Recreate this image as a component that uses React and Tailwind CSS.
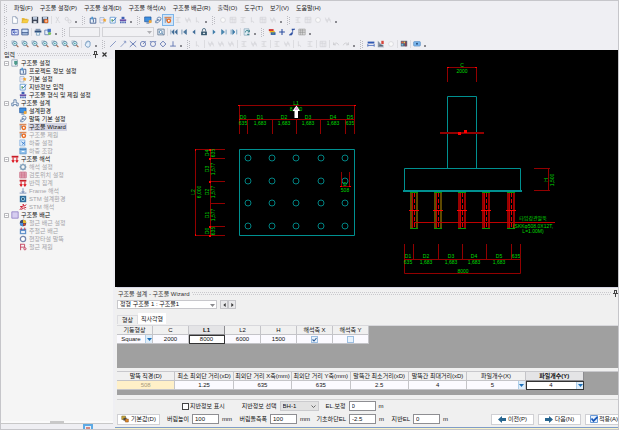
import React from "react";

const NAVY = "#1f3f7a";
const GHOST = "#d2d2d6";

/* Every glyph is drawn on a 10 x 10 grid. */
const GLYPHS = {
  file: <path d="M2 .8h4l2 2v6.4H2zM6 .8v2h2" fill="#fff" stroke="#8193ad" strokeWidth=".8" />,
  open: <g><path d="M1 8.5V2.5h3l1 1h3v1.5" fill="#e8b93c" /><path d="M.8 8.6 2.6 4.6h7L8 8.6z" fill="#f7cf45" stroke="#c99a25" strokeWidth=".4" /></g>,
  save: <g><path d="M1 1h8v8H1z" fill="#3c4556" /><path d="M2.5 1h5v3.6h-5z" fill="#b9c6da" /><path d="M3 6.4h4V9H3z" fill="#e6e9ee" /></g>,
  saveRun: <g><path d="M1 1h8v8H1z" fill="#4c5566" /><path d="M2.5 1h5v3h-5z" fill="#b9c6da" /><circle cx="6.4" cy="6.4" r="2.8" fill="#e96a24" /><path d="M5 6.4h2.8M6.4 5v2.8" stroke="#fff" strokeWidth=".7" /></g>,
  cut: <path d="M2.5 1 6 7M6 1 3 7M2 8h1.6M6 8h1.6" stroke={GHOST} strokeWidth="1" fill="none" />,
  gears: <g fill="none" stroke={GHOST} strokeWidth="1.1"><circle cx="3.4" cy="3.6" r="2" /><circle cx="7" cy="6.8" r="1.9" /></g>,
  project: <g><path d="M1.5 2.8h7v6.2h-7z" fill="#e9f2fb" stroke={NAVY} strokeWidth=".9" /><path d="M3 1h2v3.5H3z" fill="#4b9ad8" /><path d="M5.5 4v4" stroke={NAVY} strokeWidth=".9" /></g>,
  basic: <g><path d="M1.2 2h5v6.6h-5z" fill="#fff" stroke="#7f9dc2" strokeWidth=".8" /><path d="M2.2 4h3M2.2 6h3" stroke="#b49ad0" strokeWidth=".7" /><path d="M5 3.6 6.4 4 7.2 2.8l.6 1.4 1.6.5-1.2 1.1.3 1.7-1.5-.8-1.5.8.3-1.7z" fill="#f3a52a" /></g>,
  ground: <g><path d="M1.4 1.6h6.4v7.2H1.4z" fill="#fff" stroke="#4787c8" strokeWidth=".9" /><path d="M3 4h2v3H3z" fill="#6ba86c" /><path d="M4.6 6.8 9 2" stroke="#3c78b9" strokeWidth="1.2" /></g>,
  type: <g fill="#3d5fb3"><path d="M3.2 1h3.6v2.8H3.2z" /><path d="M1 4.2h8v2.2H1z" fill="#6a4ea8" /><path d="M1.4 6.8h1.8V9H1.4zM4.1 6.8h1.8V9H4.1zM6.8 6.8h1.8V9H6.8z" /></g>,
  monitor: <g><path d="M.8 1.2h8v6h-8z" fill="#3c8fe0" stroke="#1b4f95" strokeWidth=".8" /><path d="M3 8.8h3.6" stroke="#1b4f95" /><path d="M6 5.2h3.4v3.6H6z" fill="#f2a93c" /></g>,
  clip: <g fill="none" stroke="#587aa8" strokeWidth="1"><ellipse cx="6.4" cy="3.4" rx="2.4" ry="2" /><path d="M4.2 4 2 6.4v2h3l3.6-3.6M3 7l3-3" /></g>,
  wizard: <g><path d="M.6 1h8.6v2H.6z" fill="#d98a5c" /><path d="M1.6 3v5.6M3 3v3" stroke="#6a7d97" strokeWidth=".9" /><circle cx="6" cy="6" r="3" fill="#ea6d24" /><circle cx="6" cy="6" r="1.2" fill="#fff" /></g>,
  load: <g><path d="M1 1.2h6.4v7.4H1z" fill="#dcebfa" stroke="#6ea4dc" strokeWidth=".8" /><path d="M3 3.4 7.6 7M7.6 3.4 4 7" stroke="#3d7fd0" strokeWidth="1.2" /></g>,
  combo: <g><path d="M1 1.4h8v7.2H1z" fill="#8fc0ea" stroke="#4e8bc6" strokeWidth=".8" /><path d="M1 3h8" stroke="#3b77b5" /><path d="M3.4 5.6h3.4" stroke="#fff" strokeWidth="1.2" /></g>,
  bookmark: <g><path d="M1 1h7v8H1z" fill="#eef3f8" stroke="#7b8ea6" strokeWidth=".8" /><path d="M4 2.6h4v3.4L6 8 4 6z" fill="#4b9a8a" /></g>,
  house: <path d="M3.6 1h2.8v4H9v3.6H7V7H3v1.6H1V5h2.6z" fill="#f4f8fd" stroke="#3f6495" strokeWidth=".9" />,
  react: <g><path d="M.8 1h8.4v2.2H.8z" fill="#c81e28" /><path d="M2.6 3v5.6M7.4 3v5.6M1 6.6l1.6 2.2 1.6-2.2M5.8 6.6l1.6 2.2L9 6.6" stroke="#dc1822" strokeWidth="1.3" fill="none" /></g>,
  gear: <g><circle cx="5" cy="5" r="3" fill="none" stroke="#7d9db8" strokeWidth="1.8" /><path d="M5 .6v1.6M5 7.8v1.6M.6 5h1.6M7.8 5h1.6M1.9 1.9 3 3M7 7l1.1 1.1M8.1 1.9 7 3M3 7 1.9 8.1" stroke="#7d9db8" strokeWidth="1.2" /></g>,
  redgrid: <path d="M1 1.4h8v7.2H1zM1 3.8h8M1 6.2h8M3.6 1.4v7.2M6.4 1.4v7.2" fill="#f7e4ea" stroke="#b83a5c" strokeWidth=".8" />,
  frame: <path d="M5 1.5v5.6M.8 7.6h8.4M3.4 5l1.6 2L6.6 5" fill="none" stroke="#6d86b4" strokeWidth="1.1" />,
  stm: <g><path d="M1 1h8v8H1z" fill="#2d6b9a" /><circle cx="5" cy="5" r="2.5" fill="#9fd0e8" /><circle cx="5" cy="5" r="1.2" fill="#173a58" /></g>,
  stmrun: <path d="M1 8.6 4 5 1.6 4.6 5.6 4 5 1.4 7 3.6 9.2 2M3 8.6 5.4 6l2.4 2.4M6.4 5.2 9 5.8" fill="none" stroke="#cc2035" strokeWidth="1.2" />,
  rebar: <path d="M1 1h8v8H1z" fill="#d6cdf0" stroke="#8d7cc4" strokeWidth="1" />,
  colors: <g><circle cx="5" cy="5" r="4" fill="#3c4c70" /><path d="M5 5V1a4 4 0 0 1 4 4z" fill="#e5b72f" /><path d="M5 5v4a4 4 0 0 1-4-4z" fill="#4b8bd4" /><circle cx="6.8" cy="7" r="1.6" fill="#c94b33" /></g>,
  cal: <g><path d="M1 2.2h8V9H1z" fill="#5e8fc9" /><path d="M2.8.8v3M7.2.8v3" stroke="#cc3347" strokeWidth="1.1" /><path d="M2.6 5h4.8v2.6H2.6z" fill="#e8eef8" /></g>,
  ring: <circle cx="5" cy="5" r="3.3" fill="#fff" stroke="#7285ad" strokeWidth="1.6" />,
  flag: <g fill="none" stroke="#c33b5a" strokeWidth="1.1"><path d="M2 1v8M2 1.6h5v3.6H2" /><circle cx="7.4" cy="7.2" r="1.4" /></g>,
  tray: <g><path d="M1 1.4h8v7.2H1z" fill="#cfe0f8" stroke={NAVY} strokeWidth=".9" /><path d="M1 6h8" stroke={NAVY} strokeWidth="1.2" /></g>,
  back: <g><path d="M1 2h8v6.6H1z" fill="#dfe9fa" stroke="#3344a0" strokeWidth="1" /><path d="M1 2.2h3.6" stroke="#3344a0" strokeWidth="1.6" /><path d="M2.6 5.3h4.6M4.6 3.6 2.8 5.3l1.8 1.7" fill="none" stroke="#2d45b0" strokeWidth="1" /></g>,
  printer: <g><path d="M2 1h6v2.2H2z" fill="#7f95b0" /><path d="M.8 3.2h8.4v2.4H.8z" fill="#2f4f7c" /><path d="M3 5.6h4V9H3z" fill="#e8f3fa" stroke="#4b7ca5" strokeWidth=".7" /></g>,
  preview: <g><path d="M1 2.6h5v5.8H1z" fill="#e8effa" stroke="#3a5c9a" strokeWidth=".8" /><path d="M4.4 1h4.2v4.4H4.4z" fill="#3f6fc1" /><circle cx="7" cy="7" r="1.9" fill="#7fc35e" /></g>,
  capture: <g><path d="M1 1.4h8v7.2H1z" fill="#e3ebf5" stroke="#586b84" strokeWidth=".9" /><circle cx="4.6" cy="5" r="1.9" fill="#fff" stroke="#3b719f" strokeWidth=".9" /><path d="m6 6.4 2 1.8" stroke="#3b719f" /></g>,
  first: <path d="M5 2v6L2 5zM9 2v6L6 5zM1 2v6" fill="#3e6b96" stroke="#3e6b96" strokeWidth=".6" />,
  prevEnd: <path d="M8 2v6L4.4 5zM2.4 2v6" fill="#4b789f" stroke="#3e6b96" strokeWidth=".8" />,
  prev: <path d="M6.6 2v6L3 5z" fill="#3e6b96" />,
  lock: <g><path d="M1.4 4.4h7.2V9H1.4z" fill="#35566d" /><path d="M3 4.4V2.6a2 2 0 0 1 4 0v1.8" fill="none" stroke="#47697f" strokeWidth="1.1" /><path d="M3.6 6h2.8v1.6H3.6z" fill="#d7e3e8" /></g>,
  next: <path d="M3.4 2v6L7 5z" fill="#3e7ca9" />,
  nextEnd: <path d="M2 2v6l3.6-3zM7.6 2v6" fill="#4b89b0" stroke="#3e7ca9" strokeWidth=".8" />,
  last: <path d="M1.4 2v6M3.4 2v6l2.8-3zM8.4 2v6" fill="#3e7ca9" stroke="#3e7ca9" strokeWidth=".8" />,
  refresh: <g><path d="M1.4 1h6v8h-6z" fill="#e0eef5" stroke="#6f94aa" strokeWidth=".7" /><path d="M3 5.6a2.4 2.4 0 0 1 4.6-1.2M8 2.6v2.2H5.8M5 7.8l3 .6" fill="none" stroke="#24737f" strokeWidth="1" /></g>,
  layers: <g><path d="M1 1.4h6v2.4H1z" fill="#d22c2c" /><path d="M2 3.6h6.4v2.2H2z" fill="#f1b51c" /><path d="M3.4 5.4h6v3.2h-6z" fill="#2e57a8" /><path d="M4.6 6.6h3.4" stroke="#5bbd61" strokeWidth=".9" /></g>,
  defaults: <g><path d="M1 1.4h4.6v4.2H1z" fill="#d9b23a" stroke="#6d5a1c" strokeWidth=".7" /><path d="M3 3.4h4v3.6H3z" fill="#4a4a4a" /><path d="M5.4 5h3.8v3.8H5.4z" fill="#e08a2c" stroke="#7a4614" strokeWidth=".6" /></g>,
  plus: <path d="M5 1.4v7.2M1.4 5h7.2" stroke="#2a4da0" strokeWidth="1.3" />,
  slash: <path d="M4.6 1.4h4L5.4 3 6 4.6 1.6 8.8h3L6 6" fill="#2a4da0" stroke="#2a4da0" strokeWidth=".8" />,
  hatch: <path d="M1 1.4h8v7.2H1zM1 3.6h8M1 5.8h8M3.4 1.4v7.2M5.8 1.4v7.2" fill="#e6e6e6" stroke="#8a8a8a" strokeWidth=".7" />,
  zoom: <g><path d="M1 1h3.4v3.4H1z" fill="#dbe8f1" stroke="#7896ae" strokeWidth=".5" /><circle cx="4.8" cy="4.4" r="2.7" fill="#d8edf3" stroke="#4f7c99" strokeWidth="1" /><circle cx="4.8" cy="4.4" r="1" fill="#3f9ea3" /><path d="m6.8 6.4 2.4 2.4" stroke="#a0644a" strokeWidth="1.3" /></g>,
  hand: <path d="M2.4 5V3a.7.7 0 0 1 1.3 0V1.8a.7.7 0 0 1 1.3 0v-.2a.7.7 0 0 1 1.3 0v1a.7.7 0 0 1 1.3 0V6c0 2-1 3-2.600 3S2 8 1.400 5.600z" fill="#e3effb" stroke="#4777a8" strokeWidth=".8" />,
  line: <path d="M1.4 8.6 8.6 1.4" stroke="#6078b4" strokeWidth=".9" />,
  line2: <path d="M2 8.6 6 4.4 8 2M6 1.6h2.4V4" stroke="#6078b4" fill="none" strokeWidth=".8" />,
  cross: <path d="M1 1.4 9 8.6M9 1.4 1 8.6" stroke="#5068aa" strokeWidth="1" />,
  circle: <g fill="none" stroke="#4c64a8" strokeWidth=".9"><circle cx="5" cy="5" r="3.3" /><path d="m5 5 3.4-3.8" /></g>,
  circle2: <g fill="none" stroke="#4c64a8" strokeWidth=".9"><circle cx="5" cy="5" r="3.2" /><path d="M1 2h2M7 2h2" /></g>,
  diamond: <path d="M5 1.4 8.6 5 5 8.6 1.4 5z" fill="none" stroke="#4c64a8" strokeWidth="1" />,
  perp: <path d="M5 1.6v6M1.4 7.6h7.2" fill="none" stroke="#4c64a8" strokeWidth="1" />,
  ghostA: <path d="M2 2h6M5 2v6M2 8h6M2 5h3" fill="none" stroke={GHOST} strokeWidth=".9" />,
  ghostB: <path d="M1.4 1.6h7.2v6.8H1.4zM1.4 4h7.2M4 1.6v6.8M6.4 4v4.4" fill="none" stroke={GHOST} strokeWidth=".9" />,
  ghostC: <path d="M1.6 2 4 8l2-6 2.4 6M1.6 5h7" fill="none" stroke={GHOST} strokeWidth=".8" />,
  ghostD: <circle cx="5" cy="5" r="3" fill="#fafafa" stroke={GHOST} strokeWidth=".9" />,
  ghostE: <path d="M3 1.6v6l1.6-1.4L6 8.6" fill="none" stroke={GHOST} strokeWidth=".9" />,
  undo: <path d="M2 3v3h3M2 6c2-3 5-3 6.4.6" fill="none" stroke="#c6c6ca" strokeWidth="1" />,
  redo: <path d="M8 3v3H5M8 6C6 3 3 3 1.6 6.6" fill="none" stroke="#c6c6ca" strokeWidth="1" />,
  dimension: <g><path d="M.8 2h8.4v2.4H.8z" fill="#2f58b3" /><path d="M1 5v3.4M9 5v3.4M1 6.8h8" stroke="#2f58b3" strokeWidth=".9" /></g>,
  measure: <g><path d="M1 1v8h8z" fill="#8c98a8" /><path d="M5.4 1h3v4h-3z" fill="#d6453b" /><path d="M3 6.6h5" stroke="#3c4a5c" /></g>,
  palette: <g><path d="M1 1h8v7H1z" fill="#56657b" /><path d="M1.8 2h2.2v2H1.8z" fill="#e46144" /><path d="M4.6 2h2v2h-2z" fill="#f2c34f" /><path d="M1.8 4.8H4V7H1.8z" fill="#6fb6e2" /><path d="M7.2 2v6" stroke="#b82828" /></g>,
  help: <g><rect x=".8" y="2" width="8.4" height="5.6" rx="1" fill="#7db8ee" stroke="#4a80b8" strokeWidth=".7" /><circle cx="5" cy="4.6" r="1.2" fill="#244a78" /></g>,
};

function Glyph({ name }) {
  return <svg viewBox="0 0 10 10" className="block size-[8px] shrink-0" aria-hidden="true">{GLYPHS[name]}</svg>;
}

function Grip() {
  return (
    <span className="flex w-[9px] shrink-0 justify-center">
      <svg viewBox="0 0 3 9" className="h-[9px] w-[3px]" aria-hidden="true">
        <path d="M.5 0v9M2.5 1v8" stroke="#bcbcc2" strokeDasharray="1 1" />
      </svg>
    </span>
  );
}

function Tools({ items }) {
  return items.map((item, i) => {
    if (item === "|") return <span key={i} className="mx-px h-[8px] w-px shrink-0 bg-[#dcdce0]" />;
    if (item === "::") return <Grip key={i} />;
    if (item === ".")
      return <span key={i} className="flex h-[8px] w-[6px] shrink-0 items-end justify-center"><span className="mb-px size-[2px] bg-[#8a8a90]" /></span>;
    const on = item === "wizard";
    return (
      <button key={i} type="button" aria-label={item}
        className={on ? "flex size-[10px] shrink-0 items-center justify-center bg-[#cfe5fa] outline outline-[#7db4e8]" : "flex size-[10px] shrink-0 items-center justify-center"}>
        <Glyph name={item} />
      </button>
    );
  });
}

const MENUS = ["파일(F)", "구조물 설정(P)", "구조물 설계(D)", "구조물 해석(A)", "구조물 배근(R)", "출력(O)", "도구(T)", "보기(V)", "도움말(H)"];

const ROW1 = ["::", "file", "open", "save", "saveRun", "|", "cut", "gears", ".", "::", "project", "basic", "ground", "type", ".", "::", "monitor", "clip", "wizard", "ghostA", "ghostC", "ghostE", ".", "::", "ghostD", "ghostB", "ghostA", "ghostE", "ghostB", "ghostC", ".", "::", "ghostA", "ghostB", "ghostD", "ghostC", "."];
const ROW2A = ["::", "back", "tray", "|", "printer", "preview", ".", "::"];
const ROW2B = ["capture", "|", "first", "prevEnd", "prev", "lock", "next", "nextEnd", "last", "|", "refresh", ".", "::", "layers", "plus", "slash", "hatch", "."];
const ROW3 = ["::", "zoom", "zoom", "zoom", "zoom", "zoom", "zoom", "zoom", "|", "hand", ".", "::", "line", "line2", "cross", "circle", "circle2", "diamond", "perp", ".", "::", "ghostE", "|", "ghostC", "ghostC", "ghostC", "|", "ghostA", "ghostC", "ghostA", "|", "ghostA", "ghostC", "|", "ghostE", "ghostA", "|", "ghostB", "|", "undo", "redo", ".", "::", "dimension", "measure", "ghostD", "|", "palette", "|", "help", "."];

function Header() {
  return (
    <header className="shrink-0 bg-[#efeff3] pt-px">
      <nav className="flex h-[12px] items-center text-[#222]">
        <Grip />
        <div className="flex gap-[7px] pl-[4px]">
          {MENUS.map((m) => <button key={m} type="button" className="whitespace-nowrap">{m}</button>)}
        </div>
      </nav>
      <div className="flex h-[12px] items-center"><Tools items={ROW1} /></div>
      <div className="flex h-[12px] items-center">
        <Tools items={ROW2A} />
        <input aria-label="명령" className="ml-px h-[10px] w-[31px] border border-[#cfcfd3] bg-[#f1f1f4]" />
        <span className="relative mx-[2px] flex">
          <select aria-label="도면" className="h-[10px] w-[52px] appearance-none border border-[#d3d3d7] bg-[#f1f1f4]"><option></option></select>
          <Arrow className="right-[2px] text-[#b0b0b4]" />
        </span>
        <Tools items={ROW2B} />
      </div>
      <div className="flex h-[12px] items-center"><Tools items={ROW3} /></div>
    </header>
  );
}

function Arrow({ className }) {
  return (
    <svg viewBox="0 0 5 3" className={"pointer-events-none absolute top-[4px] h-[3px] w-[5px] " + className} aria-hidden="true">
      <path d="M0 0h5L2.5 3z" fill="currentColor" />
    </svg>
  );
}

const TREE = [
  { label: "구조물 설정", icon: "bookmark", items: [["프로젝트 정보 설정", "project"], ["기본 설정", "basic"], ["지반정보 입력", "ground"], ["구조물 형식 및 제원 설정", "type"]] },
  { label: "구조물 설계", icon: "house", items: [["설계환경", "monitor"], ["말뚝 기본 설정", "clip"], ["구조물 Wizard", "wizard", "sel"], ["구조물 제원", "wizard", "off"], ["하중 설정", "load", "off"], ["하중 조합", "combo", "off"]] },
  { label: "구조물 해석", icon: "react", items: [["해석 설정", "gear", "off"], ["검토위치 설정", "redgrid", "off"], ["반력 집계", "react", "off"], ["Frame 해석", "frame", "off"], ["STM 설계환경", "stm", "off"], ["STM 해석", "stmrun", "off"]] },
  { label: "구조물 배근", icon: "rebar", items: [["철근 배근 설정", "colors", "off"], ["주철근 배근", "cal", "off"], ["현장타설 말뚝", "ring", "off"], ["철근 제원", "flag", "off"]] },
];

const ITEM_STYLE = {
  sel: "bg-[#d5d5e3] px-px text-[#111]",
  off: "px-px text-[#a4a4a8]",
  on: "px-px text-[#111]",
};

function Dots() {
  return (
    <svg className="h-[3px] min-w-0 flex-1" aria-hidden="true">
      <path d="M0 .5h900M1 2.5h900" stroke="#c9c9cd" strokeDasharray="1 1" />
    </svg>
  );
}

function Pin() {
  return (
    <svg viewBox="0 0 5 7" className="h-[7px] w-[5px] shrink-0" aria-hidden="true">
      <path d="M1 .5h3M1.5 .5v3M3.5 .5v3M0 3.5h5M2.5 4v3" stroke="#444" fill="none" />
    </svg>
  );
}

function Sidebar() {
  return (
    <aside className="flex w-[112px] shrink-0 flex-col bg-[#f5f5f5]">
      <div className="flex h-[9px] items-center gap-[2px] bg-[#efeff3] pr-[6px] pl-[3px] text-[#222]">
        <span>입력</span>
        <Dots />
        <Pin />
        <button type="button" aria-label="닫기" className="ml-[2px]">
          <svg viewBox="0 0 5 5" className="size-[5px]"><path d="m.5.5 4 4M4.5.5l-4 4" stroke="#333" strokeWidth="1.2" /></svg>
        </button>
      </div>
      <ul className="flex-1">
        {TREE.map((g) => (
          <li key={g.label}>
            <div className="flex h-[8px] items-center gap-[2px] pl-[3px] text-[#111]">
              <svg viewBox="0 0 5 5" className="size-[5px] shrink-0"><path d="M.5.5h4v4h-4zM1.5 2.5h2" fill="#fff" stroke="#a5a5a9" strokeWidth=".8" /></svg>
              <Glyph name={g.icon} />
              {g.label}
            </div>
            <ul>
              {g.items.map(([label, icon, state = "on"]) => (
                <li key={label} className="flex h-[8px] items-center gap-px pl-[18px] whitespace-nowrap">
                  <Glyph name={icon} />
                  <span className={ITEM_STYLE[state]}>{label}</span>
                </li>
              ))}
            </ul>
          </li>
        ))}
      </ul>
      <div className="flex h-[3px] justify-center border-b border-[#c8c8c8] bg-[#fafafa]">
        <span className="h-[2px] w-[14px] bg-[#c8c8c8]" />
      </div>
      <div className="flex h-[5px] justify-end bg-[#efeff3] pr-[20px]">
        <span className="flex w-[10px] justify-center border-2 border-b-0 border-[#5eaae4] bg-[#e8eef6] pt-px">
          <span className="h-[2px] w-[4px] bg-[#d48a84]" />
        </span>
      </div>
    </aside>
  );
}

function T({ x, y, v, children }) {
  return (
    <text x={x} y={y} textAnchor="middle" dominantBaseline="central" transform={v ? `rotate(-90 ${x} ${y})` : undefined}>
      {children}
    </text>
  );
}

const PILE_X = [248, 272, 296, 321, 345];
const PILE_Y = [158, 181, 203, 226];
const SECTION_X = [414, 438, 462, 486, 511];

function Drawing() {
  return (
    <svg viewBox="115 50 503 237" className="block min-h-0 w-full flex-1 bg-black" role="img" aria-label="구조물 도면">
      <g stroke="#009090" fill="none">
        <path d="M239.5 149.5h115v86h-115z" />
        {PILE_Y.map((y) => PILE_X.map((x) => <circle key={x + "-" + y} cx={x} cy={y} r="3" strokeWidth=".9" />))}
        <path d="M447.5 168.5v-72h29v72M404.5 190v-21.5h116V190" />
        <path d="M403 191h119" strokeWidth="2" />
      </g>
      <g stroke="#920000" fill="none">
        <path d="M239.5 134v-28.5h115V134M239.5 119.5h115M247.5 119v15M272.5 119v15M296.5 119v15M320.5 119v15M345.5 119v15" />
        <path d="M225 149.5h-29.5v86H225M210.5 149v86M210 158.5h15M210 181.5h15M210 203.5h15M210 226.5h15" />
        <path d="M341.5 172v14.5h8V172" />
        <path d="M447.5 82V67.5h29V82M534 168.5h16M534 190.5h16M548.5 168v22" />
        <path d="M440 133h44" strokeWidth="2" />
        <path d="M404.5 244v29.5h116V244M404 259.5h117M413.5 244v15M438.5 244v15M462.5 244v15M486.5 244v15M511.5 244v15" />
      </g>
      <path d="M238 105h2v1h-2zM354 105h2v1h-2zM239 119h1v1h-1zM195 149h1v2h-1zM195 234h1v2h-1zM447 67h2v1h-2zM475 67h2v1h-2zM458 132h3v3h-3zM464 130h3v3h-3zM340 186h2v1h-2zM349 186h2v1h-2zM209 149h2v2h-2zM209 158h2v2h-2zM209 181h2v2h-2zM209 226h2v2h-2zM209 235h2v2h-2z" fill="#f00" />
      {SECTION_X.map((x, i) => (
        <g key={x} fill="none">
          <path d={`M${x - 3} 192v36M${x + 3} 192v36`} stroke={i < 2 ? "#7d6200" : "#c80000"} strokeWidth="1.5" />
          <path d={`M${x - 1.5} 192v36`} stroke="#c00000" />
          <path d={`M${x + 0.5} 193v35`} stroke="#e00000" strokeDasharray="4 2" />
          <path d={`M${x - 4} 192.5h8M${x - 4} 228.5h8`} stroke="#009a00" />
          <path d={`M${x - 5} 210.5h10`} stroke="#f00" />
        </g>
      ))}
      <path d="M414 222.5h141" stroke="#c00000" />
      <g fill="#00dc00" className="font-['Liberation_Sans','Noto_Sans_CJK_KR',sans-serif] text-[5px]">
        <T x="296" y="103">L1</T><T x="296" y="109">8,000</T>
        <T x="243" y="117">D0</T><T x="260" y="117">D1</T><T x="284" y="117">D2</T><T x="308" y="117">D3</T><T x="333" y="117">D4</T><T x="350" y="117">D5</T>
        <T x="243" y="123">635</T><T x="260" y="123">1,683</T><T x="284" y="123">1,683</T><T x="308" y="123">1,683</T><T x="333" y="123">1,683</T><T x="350" y="123">635</T>
        <T v x="193" y="192">L2</T><T v x="199" y="192">6,000</T>
        <T v x="207" y="153">D4</T><T v x="207" y="169">D3</T><T v x="207" y="192">D2</T><T v x="207" y="215">D1</T><T v x="207" y="231">D0</T>
        <T v x="213" y="153">635</T><T v x="213" y="169">1,577</T><T v x="213" y="192">1,577</T><T v x="213" y="215">1,577</T><T v x="213" y="231">635</T>
        <T x="345" y="184">D</T><T x="345" y="190">508</T>
        <T x="462" y="65">C</T><T x="462" y="71">2000</T>
        <T v x="546" y="180">H</T><T v x="552" y="180">1,500</T>
        <T x="408" y="256">D1</T><T x="426" y="256">D2</T><T x="451" y="256">D3</T><T x="474" y="256">D4</T><T x="499" y="256">D5</T><T x="516" y="256">635</T>
        <T x="408" y="262">635</T><T x="426" y="262">1,683</T><T x="451" y="262">1,683</T><T x="474" y="262">1,683</T><T x="499" y="262">1,683</T>
        <T x="463" y="271">8000</T>
        <T x="533" y="218">타입강관말뚝</T><T x="533" y="226">(SKKφ508.0X12T,</T><T x="533" y="231">L=1.00M)</T>
      </g>
      <path d="M296.500 105.500 300 111h-2v7h-3.500v-7h-2z" fill="#fff" />
      <path d="M296.500 106.500 298.500 110h-4z" fill="#e6a8e6" />
    </svg>
  );
}

const TH = "h-[9px] overflow-hidden border-r border-b border-[#c4c4c8] bg-[#f0f0f0] p-0 text-center font-normal whitespace-nowrap";
const TH_ON = "h-[9px] overflow-hidden border-r border-b border-[#8c8c90] bg-[#e4e4e6] p-0 text-center font-bold whitespace-nowrap";
const TD = "h-[9px] border-r border-b border-[#c4c4c8] bg-[#fbfaff] p-0 text-center";
const TD_ON = "h-[9px] border-r border-b border-[#333] bg-white p-0 text-center outline outline-[#333] -outline-offset-1";

function DropMark() {
  return (
    <span className="flex h-[8px] w-[7px] items-center justify-center border-l border-[#b0cfea] bg-[#deedfa]">
      <svg viewBox="0 0 5 3" className="h-[3px] w-[5px]"><path d="M0 0h5L2.5 3z" fill="#1d6fb8" /></svg>
    </span>
  );
}

function WithDrop({ children }) {
  return <span className="flex items-center"><span className="flex-1">{children}</span><DropMark /></span>;
}

function ColumnTable() {
  const heads = ["기둥형상", "C", "L1", "L2", "H", "해석축 X", "해석축 Y"];
  return (
    <table className="w-[252px] table-fixed border-separate border-spacing-0 leading-[8px]">
      <thead><tr>{heads.map((h) => <th key={h} className={h === "L1" ? TH_ON : TH}>{h}</th>)}</tr></thead>
      <tbody>
        <tr>
          <td className={TD}><WithDrop>Square</WithDrop></td>
          <td className={TD}>2000</td>
          <td className={TD_ON}>8000</td>
          <td className={TD}>6000</td>
          <td className={TD}>1500</td>
          <td className={TD}><Check label="해석축 X" checked blue /></td>
          <td className={TD}><Check label="해석축 Y" blue /></td>
        </tr>
      </tbody>
    </table>
  );
}

function Check({ label, checked, blue }) {
  return (
    <span className="relative mx-auto block size-[7px]">
      <input type="checkbox" aria-label={label} defaultChecked={checked}
        className={blue ? "peer block size-[7px] appearance-none border border-[#9dbfe2] bg-[#eaf3fc]" : "peer block size-[7px] appearance-none border border-[#444] bg-white"} />
      <svg viewBox="0 0 7 7" className="pointer-events-none absolute inset-0 hidden size-[7px] peer-checked:block"><path d="m1.5 3.5 1.5 1.5 2.5-3" fill="none" stroke="#2b5c9c" strokeWidth="1.1" /></svg>
    </span>
  );
}

function PileTable() {
  const heads = ["말뚝 직경(D)", "최소 최외단 거리(xD)", "최외단 거리 X축(mm)", "최외단 거리 Y축(mm)", "말뚝간 최소거리(xD)", "말뚝간 최대거리(xD)", "파일개수(X)", "파일개수(Y)"];
  return (
    <table className="w-[467px] table-fixed border-separate border-spacing-0 leading-[8px]">
      <thead><tr>{heads.map((h, i) => <th key={h} className={i === 7 ? TH_ON : TH}>{h}</th>)}</tr></thead>
      <tbody>
        <tr>
          <td className="h-[9px] border-r border-b border-[#c4c4c8] bg-[#fff0c8] p-0 text-center text-[#a89c80]">508</td>
          <td className={TD}>1.25</td>
          <td className={TD}>635</td>
          <td className={TD}>635</td>
          <td className={TD}>2.5</td>
          <td className={TD}>4</td>
          <td className={TD}><WithDrop>5</WithDrop></td>
          <td className={TD_ON}><WithDrop>4</WithDrop></td>
        </tr>
      </tbody>
    </table>
  );
}

function Field({ id, label, value, unit, width }) {
  return (
    <div className="flex shrink-0 items-center">
      <label htmlFor={id} className={"pr-[3px] text-right whitespace-nowrap " + width}>{label}</label>
      <input id={id} defaultValue={value} className="h-[10px] w-[27px] border border-[#8e8e92] bg-white pl-[2px]" />
      <span className="pl-[3px]">{unit}</span>
    </div>
  );
}

const BTN = "flex h-[11px] w-[43px] shrink-0 items-center justify-center gap-[2px] border border-[#d0d0d4] bg-white whitespace-nowrap";

function BigArrow({ back }) {
  return (
    <svg viewBox="0 0 8 7" className="h-[7px] w-[8px]" aria-hidden="true">
      <path d={back ? "M4 0v2h4v3H4v2L0 3.5z" : "M4 0v2H0v3h4v2l4-3.5z"} fill="#27658f" />
    </svg>
  );
}

function Panel() {
  return (
    <section className="flex shrink-0 flex-col bg-[#f0f0f0] pl-[2px] text-[#111]">
      <div className="flex h-[12px] items-center gap-[2px] border-t border-[#d6d6e4] pl-px text-[#333]">
        <h2 className="whitespace-nowrap">구조물 설계 - 구조물 Wizard</h2>
        <Dots />
        <Pin />
      </div>
      <div className="flex items-center pt-px">
        <span className="relative flex">
          <select aria-label="구조물 선택" className="h-[9px] w-[100px] appearance-none border border-[#c8c8cc] bg-white pl-[2px] leading-[7px]"><option>정형 구조물 1 : 구조물1</option></select>
          <Arrow className="right-[2px] text-[#8a8a8e]" />
        </span>
        <button type="button" aria-label="이전 구조물" className="ml-[3px] flex h-[9px] w-[8px] items-center justify-center border border-[#c4c4c8] bg-[#e9e9eb]"><svg viewBox="0 0 3 5" className="h-[4px] w-[3px]"><path d="M3 0v5L0 2.5z" fill="#333" /></svg></button>
        <button type="button" aria-label="다음 구조물" className="flex h-[9px] w-[8px] items-center justify-center border border-[#c4c4c8] bg-[#e9e9eb]"><svg viewBox="0 0 3 5" className="h-[4px] w-[3px]"><path d="M0 0v5l3-2.5z" fill="#333" /></svg></button>
      </div>
      <div className="flex items-end pt-[4px] pb-px">
        <button type="button" className="h-[9px] w-[21px] border border-b-0 border-[#dcdce0] leading-[8px]">형상</button>
        <button type="button" className="h-[11px] w-[28px] bg-white leading-[8px] whitespace-nowrap">직사각형</button>
      </div>
      <div className="h-[43px] border-t border-[#d8d8dc] bg-[#a0a0a0]"><ColumnTable /></div>
      <div className="mt-[3px] h-[24px] border-t border-[#c8c8cc] bg-[#a0a0a0]"><PileTable /></div>
      <div className="mt-[4px] border-t border-[#d0d0d0] pb-px">
        <div className="flex h-[12px] items-center">
          <label className="ml-[65px] flex shrink-0 items-center gap-px whitespace-nowrap"><Check label="지반정보 표시" />지반정보 표시</label>
          <label htmlFor="ground" className="ml-[17px] shrink-0 whitespace-nowrap">지반정보 선택</label>
          <span className="relative ml-[3px] flex">
            <select id="ground" className="h-[10px] w-[39px] appearance-none border border-[#cbcbce] bg-[#e2e2e2] pl-[2px] leading-[8px]"><option>BH-1</option></select>
            <svg viewBox="0 0 5 3" className="pointer-events-none absolute top-[4px] right-[3px] h-[3px] w-[5px]"><path d="m.5.5 2 2 2-2" fill="none" stroke="#666" /></svg>
          </span>
          <Field id="el" label="EL.보정" value="0" unit="m" width="w-[30px]" />
        </div>
        <div className="flex h-[14px] items-center">
          <button type="button" className={BTN}><Glyph name="defaults" />기본값(D)</button>
          <Field id="f1" label="버림높이" value="100" unit="mm" width="w-[32px]" />
          <Field id="f2" label="버림돌측폭" value="100" unit="mm" width="w-[38px]" />
          <Field id="f3" label="기초하단EL" value="-2.5" unit="m" width="w-[39px]" />
          <Field id="f4" label="지반EL" value="0" unit="m" width="w-[29px]" />
          <div className="ml-auto flex gap-[4px]">
            <button type="button" className={BTN}><BigArrow back />이전(P)</button>
            <button type="button" className={BTN}><BigArrow />다음(N)</button>
            <button type="button" className="flex h-[11px] items-center gap-px border border-r-0 border-[#d0d0d4] bg-white pl-[4px] whitespace-nowrap">
              <svg viewBox="0 0 8 8" className="size-[8px] shrink-0"><path d="M.5.5h7v7h-7z" fill="#e8f1fc" stroke="#6a9bd8" /><path d="m1.5 3.5 2 2.5 4-4" fill="none" stroke="#1a58b8" strokeWidth="1.8" /></svg>
              적용(A)
            </button>
          </div>
        </div>
      </div>
      <div className="-ml-[2px] h-[2px] border-t border-[#7f9cc8] bg-[#f8f3c8]" />
    </section>
  );
}

export default function App() {
  return (
    <div className="h-screen bg-white pr-px pb-px font-['Liberation_Sans','Noto_Sans_CJK_KR',sans-serif] text-[6px] leading-[8px]">
      <div className="flex h-full flex-col overflow-hidden border border-[#c6c6ca] bg-[#efeff3]">
        <Header />
        <div className="flex min-h-0 flex-1">
          <Sidebar />
          <main className="ml-[2px] flex min-w-0 flex-1 flex-col">
            <Drawing />
            <Panel />
          </main>
        </div>
      </div>
    </div>
  );
}
